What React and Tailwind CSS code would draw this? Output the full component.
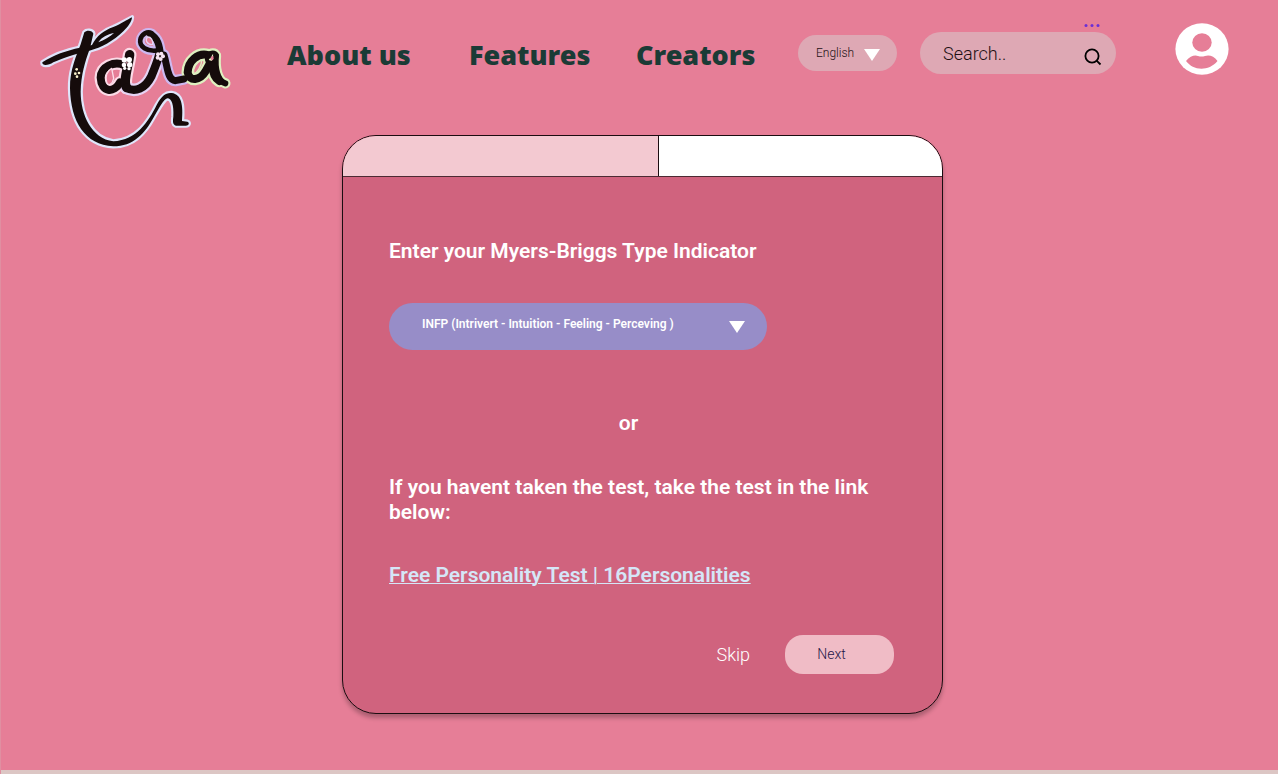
import React from "react";

const shapes = [
  { halo: "#dfe3fa", d: "M37 172 C70 150 110 136 150 128 L186 120 C200 92 222 76 250 66 C275 56 290 45 306 37 C306 48 294 66 280 79 C250 108 215 128 178 137 C130 148 95 160 70 172 C55 182 36 184 37 172Z M205 112 C222 106 240 95 252 84 C232 88 215 96 205 112Z" },
  { halo: "#dfe6fb", d: "M163 82 C170 74 188 76 190 86 L180 130 C165 170 153 210 152 260 C152 330 185 400 250 409 C320 405 355 350 380 300 C395 272 408 262 425 264 C455 268 460 300 456 348 L472 350 C480 353 476 362 468 362 L438 362 C428 358 428 350 430 335 C432 300 425 280 412 280 C400 284 390 305 372 335 C345 385 310 424 250 424 C165 420 122 350 120 250 C119 195 140 150 152 118 Z" },
];

const strokes = [
  { halo: "#fbdce8", w: 24, d: "M282 180 C252 168 213 184 212 218 C214 262 252 266 270 232" },
  { halo: "#fbdce8", w: 28, d: "M299 149 C294 190 278 230 290 248" },
  { halo: "#e6d3f4", w: 25, d: "M290 248 C315 264 346 250 364 214 C374 190 382 170 388 148" },
  { halo: "#cdb8f0", w: 14, d: "M386 136 C350 142 327 124 331 104 C335 86 352 78 366 85" },
  { halo: "#cdb8f0", w: 21, d: "M362 89 C384 98 388 122 392 150" },
  { halo: "#cdb8f0", w: 21, d: "M402 150 C413 185 412 226 436 227 L462 222" },
  { halo: "#dff0c0", w: 24, d: "M534 150 C504 142 474 168 473 202 C478 232 510 226 526 200 L538 178" },
  { halo: "#dff0c0", w: 12, d: "M534 150 C542 140 556 140 560 150 C560 164 550 174 538 176 C530 170 528 158 534 150Z" },
  { halo: "#dff0c0", w: 18, d: "M558 152 C554 188 562 228 586 235" },
  { halo: "#dff0c0", w: 24, d: "M548 182 C548 202 556 220 568 228" },
];

function Logo() {
  return (
    <svg viewBox="0 0 630 465" role="img" aria-label="Tara" className="h-[155px] w-[210px]" strokeLinecap="round" strokeLinejoin="round">
      {shapes.map((s) => (
        <path key={s.halo} d={s.d} fill="none" stroke={s.halo} strokeWidth="13" />
      ))}
      {strokes.map((s) => (
        <path key={s.d} d={s.d} fill="none" stroke={s.halo} strokeWidth={s.w + 13} />
      ))}
      {shapes.map((s) => (
        <path key={s.d} d={s.d} fill="#150b0b" />
      ))}
      {strokes.map((s) => (
        <path key={s.d} d={s.d} fill="none" stroke="#150b0b" strokeWidth={s.w} />
      ))}
      <path d="M542 156 L550 152 L551 162 L544 167Z" fill="#e67e97" />
      <path d="M245 190 C230 198 225 215 230 232 C236 246 248 236 251 220Z" fill="#e67e97" stroke="#fbdce8" strokeWidth="4" />
      <path d="M352 96 C345 106 351 120 368 119 C370 106 363 95 352 96Z" fill="#e67e97" stroke="#e6d3f4" strokeWidth="4" />
      <path d="M516 164 C498 174 489 190 491 206 C502 204 514 184 516 164Z" fill="#e67e97" stroke="#dff0c0" strokeWidth="4" />
      <g fill="#fff">
        <circle cx="283" cy="165" r="8" /><circle cx="298" cy="164" r="8" />
        <circle cx="282" cy="180" r="7" /><circle cx="299" cy="179" r="8" />
        <circle cx="284" cy="190" r="5" /><circle cx="297" cy="191" r="5" />
      </g>
      <circle cx="290" cy="173" r="3" fill="#bb8794" />
      <g fill="#f6e4f2">
        <circle cx="384" cy="148" r="6" /><circle cx="394" cy="146" r="6" />
        <circle cx="399" cy="154" r="6" /><circle cx="392" cy="162" r="6" /><circle cx="383" cy="158" r="6" />
      </g>
      <circle cx="390" cy="154" r="3" fill="#4c353d" />
      <g fill="#fbf3cd">
        <circle cx="140" cy="193" r="4" /><circle cx="147" cy="204" r="4" />
        <circle cx="136" cy="206" r="4" /><circle cx="141" cy="215" r="4" />
      </g>
    </svg>
  );
}

function Triangle() {
  return (
    <svg viewBox="0 0 16 12" className="h-3 w-4" fill="#fff" aria-hidden="true">
      <path d="M0 0H16L8 12Z" />
    </svg>
  );
}

const navLink = "w-[120px] whitespace-nowrap";

export default function App() {
  return (
    <div className="flex min-h-screen flex-col border-l border-[#e08fa1] bg-[#e67e97] font-['Roboto',sans-serif]">
      <header className="flex h-[106px] items-center pr-[49px] pl-[29px]">
        <a href="#home" className="mt-[5px] shrink-0 self-start">
          <Logo />
        </a>
        <nav className="ml-[47px] flex pt-1 font-['Noto_Sans',sans-serif] text-[27px] leading-8 font-black text-[#1b3b36]">
          <a href="#about" className={navLink}>About us</a>
          <a href="#features" className={navLink + " ml-[62px]"}>Features</a>
          <a href="#creators" className={navLink + " ml-[47px]"}>Creators</a>
        </nav>
        <div className="relative ml-[42px] shrink-0">
          <select aria-label="Language" defaultValue="English" className="h-9 w-[99px] appearance-none rounded-full bg-[#dea8b4] pl-[18px] text-[12px] font-light text-[#1d1013]">
            <option>English</option>
          </select>
          <span className="pointer-events-none absolute top-[14px] right-[17px]">
            <Triangle />
          </span>
        </div>
        <form role="search" className="relative ml-[23px] flex h-[42px] w-[196px] shrink-0 items-center rounded-full bg-[#dea8b4] pr-[14px] pl-[23px]">
          <input type="search" aria-label="Search" placeholder="Search.." className="min-w-0 flex-1 bg-transparent text-[18px] font-light text-black outline-none placeholder:text-[#1d1013]" />
          <button type="submit" aria-label="Submit search" className="pt-2">
            <svg viewBox="0 0 18 18" className="size-[18px]" fill="none" stroke="#000" strokeWidth="1.8" aria-hidden="true">
              <circle cx="8" cy="8" r="6.6" />
              <path d="M12.6 12.6L16.500 16.500" />
            </svg>
          </button>
          <svg viewBox="0 0 16 4" className="absolute -top-2 right-4 h-1 w-4" fill="#6a2fd6" aria-hidden="true">
            <circle cx="2" cy="1.500" r="1.500" /><circle cx="8" cy="1.500" r="1.500" /><circle cx="14" cy="1.500" r="1.500" />
          </svg>
        </form>
        <button type="button" aria-label="Account" className="mt-[23px] ml-auto shrink-0 self-start">
          <svg viewBox="0 0 54 52" className="h-[52px] w-[54px]" aria-hidden="true">
            <ellipse cx="27" cy="26" rx="26.6" ry="25.7" fill="#fff" />
            <ellipse cx="27" cy="19.500" rx="9.700" ry="9.300" fill="#e67e97" />
            <path d="M11 38C15 33 20 31.500 23 33Q26.500 34 30 33C34 31.500 39 33 42.500 38C38 43.500 32 45.700 26.500 45.700C20 45.700 15 43 11 38Z" fill="#e67e97" />
          </svg>
        </button>
      </header>

      <main className="flex flex-1 flex-col items-center pt-[29px] pb-[56px] pl-[6px]">
        <section className="w-[601px] max-w-full overflow-hidden rounded-[34px] border border-[#1c0d11] bg-[#d0637e] shadow-[0_4px_4px_rgba(0,0,0,0.25)]">
          <div role="tablist" className="grid h-[41px] grid-cols-[316fr_283fr] border-b border-[#4c2a33]">
            <button type="button" role="tab" aria-selected="true" aria-label="Step one" className="border-r border-[#1c0d11] bg-[#f3c9d1]" />
            <button type="button" role="tab" aria-selected="false" aria-label="Step two" className="bg-white" />
          </div>
          <form className="pt-[62px] pr-12 pb-[39px] pl-[46px] text-[21px] leading-[25px] font-semibold text-white">
            <label htmlFor="mbti" className="block">Enter your Myers-Briggs Type Indicator</label>
            <div className="relative mt-[39px] w-[378px] max-w-full">
              <select id="mbti" defaultValue="INFP" className="block h-[47px] w-full appearance-none rounded-full bg-[#978dc8] pr-12 pb-1 pl-[33px] text-[12px] font-semibold">
                <option value="INFP">INFP (Intrivert - Intuition - Feeling - Perceving )</option>
              </select>
              <span className="pointer-events-none absolute top-[18px] right-[22px]">
                <Triangle />
              </span>
            </div>
            <p className="mt-[61px] pr-[26px] text-center">or</p>
            <p className="mt-[39px]">If you havent taken the test, take the test in the link below:</p>
            <p className="mt-[38px]">
              <a href="#personality-test" className="text-[#d5e6f7] underline decoration-1">Free Personality Test | 16Personalities</a>
            </p>
            <div className="mt-[47px] flex items-center justify-end gap-[35px] font-light">
              <button type="button" className="text-[18px]">Skip</button>
              <button type="button" className="h-[39px] w-[109px] rounded-[18px] bg-[#f0bcc6] pr-4 text-[14px] text-[#1f1747]">Next</button>
            </div>
          </form>
        </section>
      </main>
      <div className="h-1 bg-[#dcc6c4]" />
    </div>
  );
}
